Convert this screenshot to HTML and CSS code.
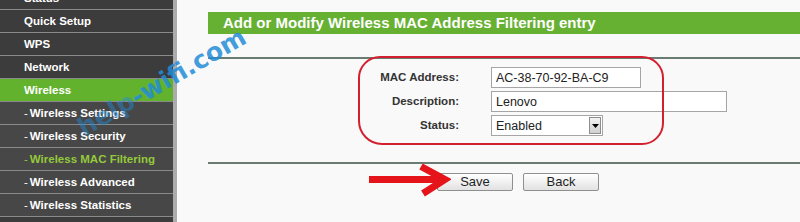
FILE: index.html
```html
<!DOCTYPE html>
<html>
<head>
<meta charset="utf-8">
<link rel="stylesheet" href="styles.css">
</head>
<body>
<div class="page">
  <nav class="sidebar">
    <ul class="menu">
      <li class="item">Status</li>
      <li class="item">Quick Setup</li>
      <li class="item">WPS</li>
      <li class="item">Network</li>
      <li class="item active">Wireless</li>
      <li class="item sub"><span class="dash">-</span>Wireless Settings</li>
      <li class="item sub"><span class="dash">-</span>Wireless Security</li>
      <li class="item sub current"><span class="dash">-</span>Wireless MAC Filtering</li>
      <li class="item sub"><span class="dash">-</span>Wireless Advanced</li>
      <li class="item sub"><span class="dash">-</span>Wireless Statistics</li>
    </ul>
  </nav>
  <main class="main">
    <h1 class="title">Add or Modify Wireless MAC Address Filtering entry</h1>
    <div class="rule"></div>
    <div class="form">
      <label class="label">MAC Address:</label>
      <div class="field"><input class="input mac" type="text" value="AC-38-70-92-BA-C9"></div>
      <label class="label">Description:</label>
      <div class="field"><input class="input desc" type="text" value="Lenovo"></div>
      <label class="label">Status:</label>
      <div class="field">
        <div class="select"><span class="select-text">Enabled</span><span class="select-btn"><svg width="7" height="4" viewBox="0 0 7 4"><path d="M0 0H7L3.5 4Z" fill="#000"/></svg></span></div>
      </div>
    </div>
    <div class="rule rule2"></div>
    <div class="buttons">
      <button class="btn">Save</button>
      <button class="btn">Back</button>
    </div>
    <div class="annot"></div>
    <svg class="arrow" width="82" height="34" viewBox="0 0 82 34">
      <path d="M0 16.5H72" stroke="#e5141b" stroke-width="7" fill="none"/>
      <path d="M52 3.5L76 16.5L54 30.5" stroke="#e5141b" stroke-width="7" fill="none" stroke-linejoin="miter"/>
    </svg>
  </main>
  <span class="watermark"><span class="wm-faint">help</span>-wifi.com</span>
</div>
</body>
</html>
```
FILE: styles.css
```css
* { box-sizing: border-box; }
html, body { margin: 0; padding: 0; }
body {
  width: 800px;
  height: 222px;
  overflow: hidden;
  font-family: "Liberation Sans", Arial, sans-serif;
  background: #f9f9f9;
}
.page {
  display: flex;
  height: 222px;
  position: relative;
}
.sidebar {
  width: 177px;
  flex: none;
  background: #3c3c3c;
  border-right: 4px solid #ababab;
  overflow: hidden;
}
.menu {
  list-style: none;
  margin: -13px 0 0;
  padding: 0;
}
.item {
  height: 23px;
  line-height: 22px;
  border-bottom: 1px solid #8a8a8a;
  padding-left: 24px;
  color: #fff;
  font-weight: bold;
  font-size: 11.5px;
  background: #3c3c3c;
  white-space: nowrap;
}
.item.active { background: #62b22e; }
.item.sub { background: #474747; }
.item.current { color: #94c93b; }
.dash { font-weight: normal; margin-right: 2px; }
.main {
  flex: 1;
  position: relative;
  padding-left: 31px;
  background: #f9f9f9;
}
.title {
  margin: 12px 0 0;
  height: 22px;
  line-height: 22px;
  padding-left: 15px;
  background: #66b032;
  color: #fff;
  font-size: 15px;
  font-weight: bold;
  white-space: nowrap;
}
.rule {
  margin-top: 23px;
  height: 2px;
  background: #6a7c72;
}
.rule2 { margin-top: 26px; }
.form {
  display: grid;
  grid-template-columns: 251px auto;
  column-gap: 32px;
  row-gap: 3px;
  padding-top: 8px;
  grid-auto-rows: 21px;
}
.label {
  text-align: right;
  font-weight: bold;
  font-size: 11.5px;
  color: #333;
  line-height: 21px;
}
.field { display: flex; align-items: center; }
.input {
  height: 21px;
  border: 1px solid #a5a5a5;
  background: #fff;
  font-family: "Liberation Sans", Arial, sans-serif;
  font-size: 12.5px;
  color: #222;
  padding: 0 0 0 4px;
  margin: 0;
  outline: none;
}
.mac { width: 150px; }
.desc { width: 236px; }
.select {
  width: 112px;
  height: 21px;
  border: 1px solid #a5a5a5;
  background: #fff;
  display: flex;
  align-items: center;
  justify-content: space-between;
  padding: 0 1px 0 4px;
}
.select-text { font-size: 12.5px; color: #222; }
.select-btn {
  width: 12px;
  height: 17px;
  border: 1px solid #8e8e8e;
  background: linear-gradient(#f4f4f4, #cfcfcf);
  display: flex;
  align-items: center;
  justify-content: center;
}
.buttons {
  display: flex;
  gap: 10px;
  margin-top: 9px;
  padding-left: 229px;
}
.btn {
  width: 76px;
  height: 18px;
  border: 1px solid #8f8f8f;
  border-radius: 2px;
  background: linear-gradient(#ffffff, #e2e2e2);
  font-family: "Liberation Sans", Arial, sans-serif;
  font-size: 13px;
  color: #1e1e1e;
  padding: 0;
  line-height: 16px;
}
.annot {
  position: absolute;
  left: 181px;
  top: 56px;
  width: 306px;
  height: 89px;
  border: 2px solid #d3202e;
  border-radius: 22px 22px 22px 24px;
}
.arrow {
  position: absolute;
  left: 192px;
  top: 163px;
}
.watermark {
  position: absolute;
  left: 80px;
  top: 118px;
  line-height: 24px;
  font-family: "DejaVu Sans", sans-serif;
  font-weight: bold;
  font-size: 25px;
  color: rgba(34, 140, 215, 0.85);
  transform-origin: 0 12px;
  transform: rotate(-30deg);
  white-space: nowrap;
}
.wm-faint { opacity: 0.55; }
```
